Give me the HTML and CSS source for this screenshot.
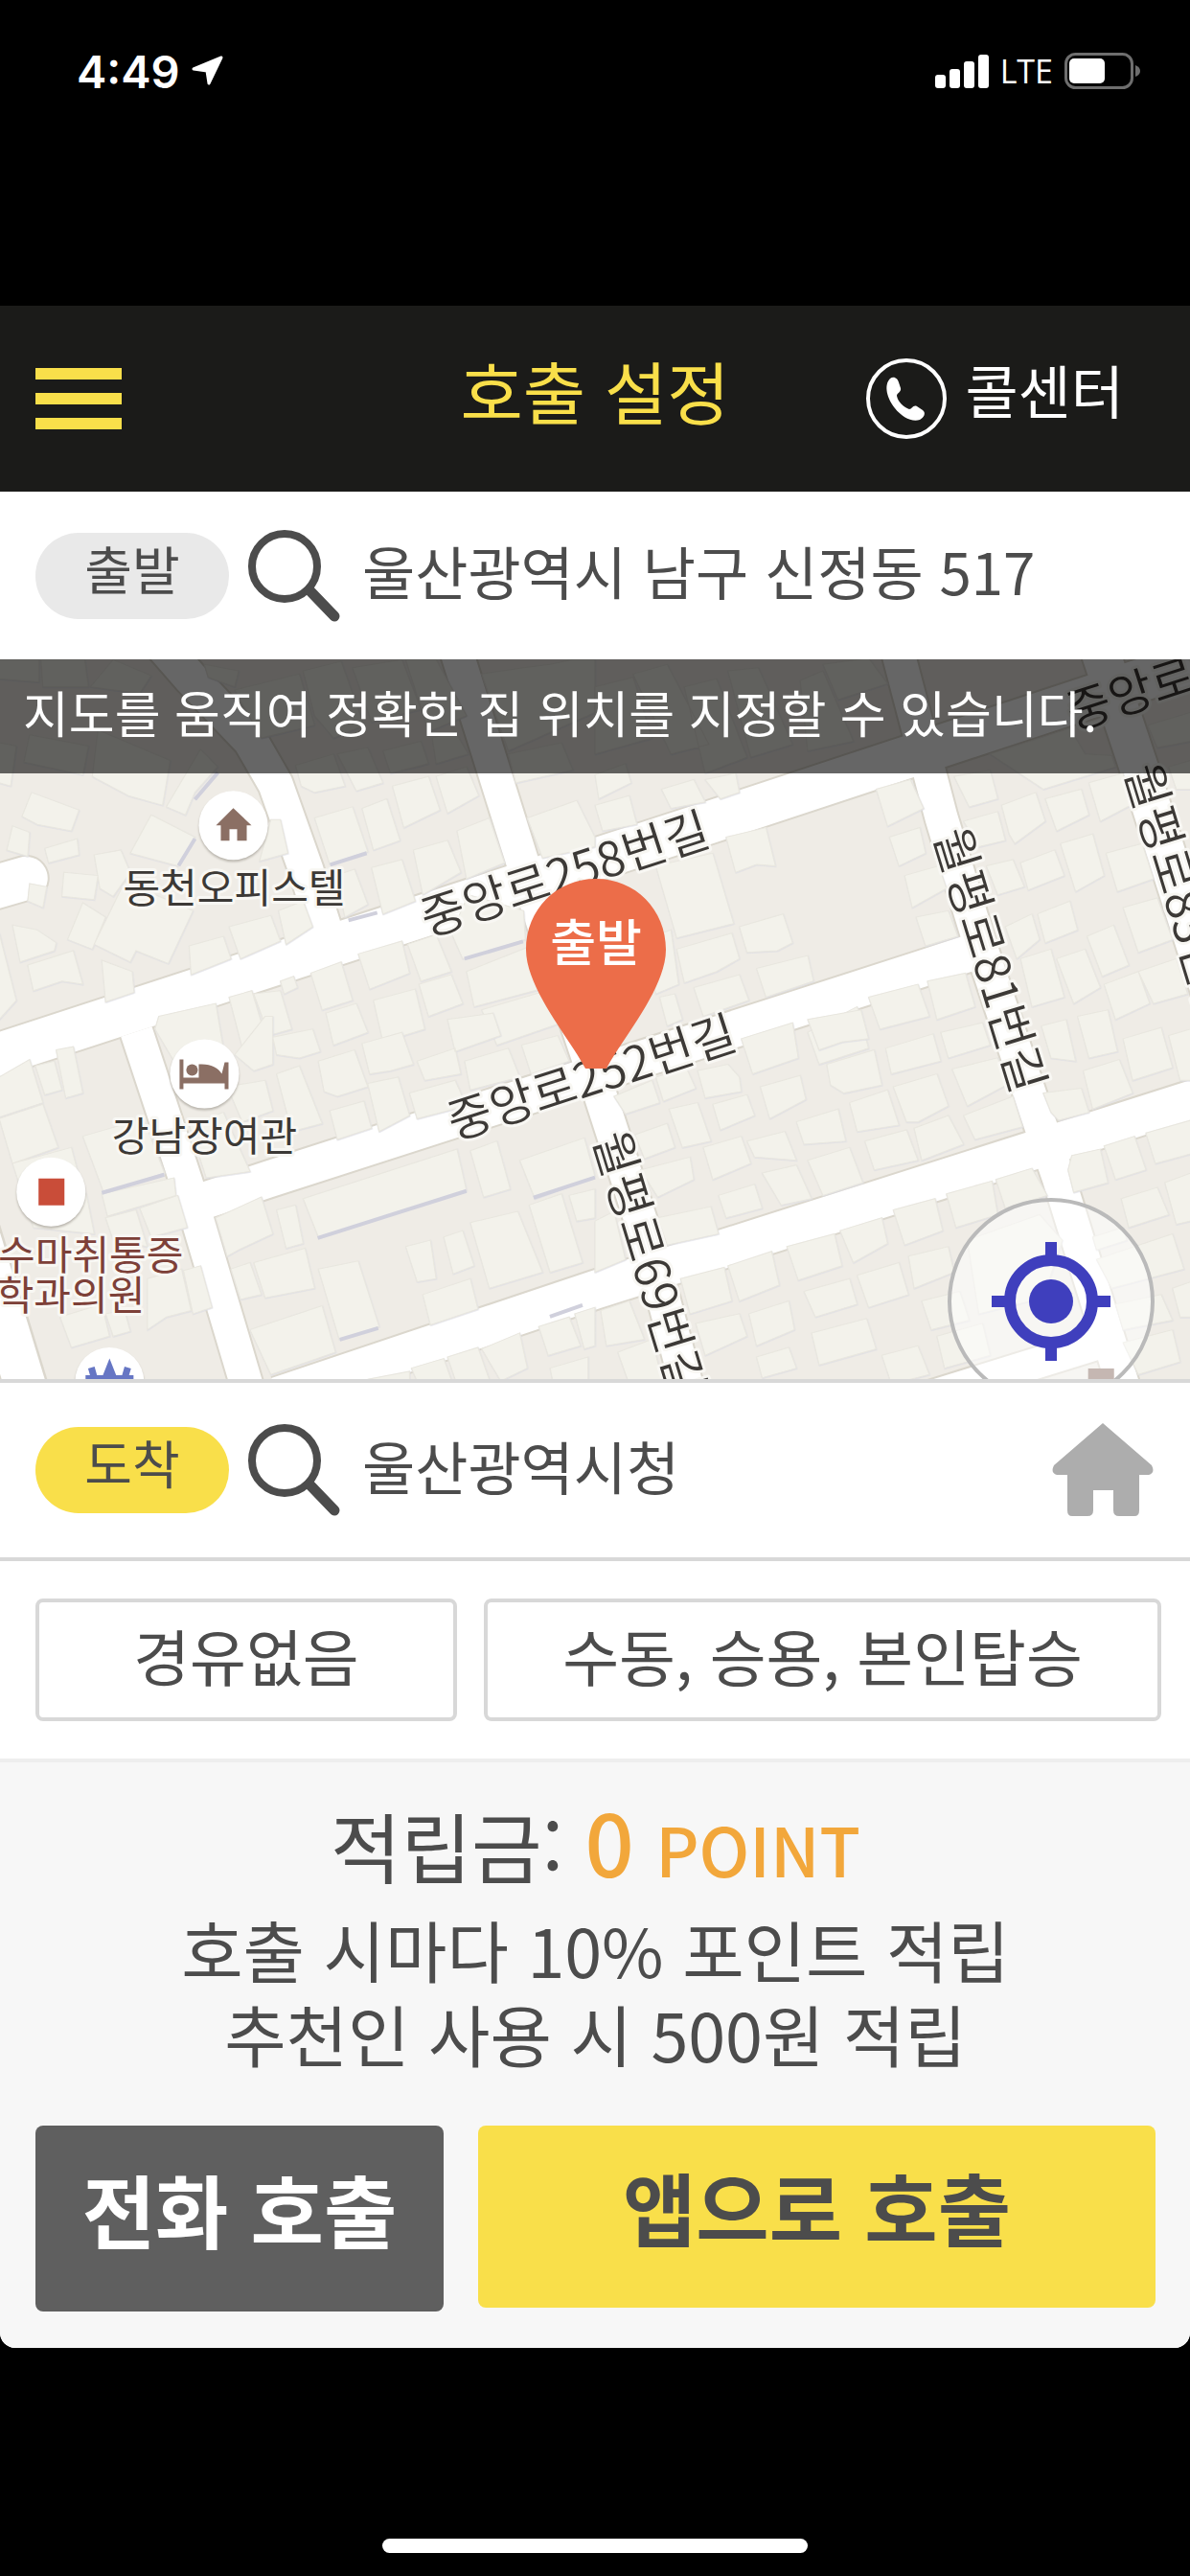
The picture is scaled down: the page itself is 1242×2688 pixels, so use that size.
FILE: index.html
```html
<!DOCTYPE html>
<html lang="ko">
<head>
<meta charset="utf-8">
<meta name="viewport" content="width=device-width">
<title>호출 설정</title>
<link rel="stylesheet" href="styles.css">
</head>
<body>

<!-- Status bar -->
<div class="status">
  <div class="status-left">
    <span class="clock">4:49</span>
    <svg width="34" height="32" viewBox="0 0 34 32"><path d="M31 2 L18 29 L16 16 L2 14 Z" fill="#fff" stroke="#fff" stroke-width="3" stroke-linejoin="round"/></svg>
  </div>
  <div class="status-right">
    <svg width="56" height="36" viewBox="0 0 56 36" fill="#fff">
      <rect x="0" y="22" width="11" height="14" rx="3"/>
      <rect x="15" y="16" width="11" height="20" rx="3"/>
      <rect x="30" y="8" width="11" height="28" rx="3"/>
      <rect x="45" y="1" width="11" height="35" rx="3"/>
    </svg>
    <span class="carrier">LTE</span>
    <svg width="80" height="38" viewBox="0 0 80 38">
      <rect x="1.5" y="1.5" width="69" height="35" rx="10" fill="none" stroke="#6e6e6e" stroke-width="3"/>
      <rect x="5" y="6" width="37" height="26" rx="5" fill="#fff"/>
      <path d="M74 13 Q79 15 79 19 Q79 23 74 25 Z" fill="#6e6e6e"/>
    </svg>
  </div>
</div>

<div class="app">

  <header class="topbar">
    <button class="menu" type="button" aria-label="메뉴"><span></span><span></span><span></span></button>
    <h1>호출 설정</h1>
    <a class="call-center" href="#">
      <svg width="86" height="86" viewBox="0 0 86 86">
        <circle cx="43" cy="43" r="40" fill="none" stroke="#fff" stroke-width="4"/>
        <path d="M26 22 C30 19 34 22 35 26 L37 32 C38 36 33 37 33 40 C34 46 40 52 46 54 C49 54 50 49 54 51 L60 55 C64 58 61 63 57 65 C49 68 38 62 31 53 C23 43 19 29 26 22 Z" fill="#fff"/>
      </svg>
      <span>콜센터</span>
    </a>
  </header>

  <!-- Departure -->
  <div class="place">
    <label class="pill" for="from">출발</label>
    <button class="icon-btn" type="button" aria-label="출발지 검색">
      <svg width="100" height="98" viewBox="0 0 100 98" fill="none" stroke="#4c4c4c">
        <circle cx="39" cy="39" r="34" stroke-width="8"/>
        <path d="M65 64 L91 91" stroke-width="11" stroke-linecap="round"/>
      </svg>
    </button>
    <input id="from" type="text" value="울산광역시 남구 신정동 517">
  </div>

  <!-- Map -->
  <div class="map">
    <svg class="map-canvas" viewBox="0 0 1242 750" preserveAspectRatio="xMidYMid slice">
      <rect width="1242" height="750" fill="#efece6"/>

      <!-- road edges, then the roads -->
      <g class="road-edge">
        <path d="M-20 418 L740 170 L1262 -2" stroke-width="48"/>
        <path d="M190 572 L280 542 L960 323 L1015 305" stroke-width="42"/>
        <path d="M290 768 L621 657 L1262 453" stroke-width="44"/>
        <path d="M143 388 L195 545 L262 770" stroke-width="38"/>
        <path d="M165 -20 L200 20 L262 85 L288 130 L320 220 L345 300" stroke-width="40"/>
        <path d="M476 -10 L545 210 L622 440 L680 620 L718 762" stroke-width="38"/>
        <path d="M936 -10 L982 165 L1020 290 L1080 470 L1104 540 L1174 765" stroke-width="38"/>
        <path d="M1147 -10 L1187 110 L1262 345" stroke-width="44"/>
        <path d="M-20 242 L28 228" stroke-width="49" stroke-linecap="round"/>
        <path d="M-30 570 L28 760" stroke-width="48"/>
        <path d="M970 768 L1150 712" stroke-width="36"/>
      </g>
      <g class="road">
        <path d="M-20 418 L740 170 L1262 -2" stroke-width="44"/>
        <path d="M190 572 L280 542 L960 323 L1015 305" stroke-width="38"/>
        <path d="M290 768 L621 657 L1262 453" stroke-width="40"/>
        <path d="M143 388 L195 545 L262 770" stroke-width="34"/>
        <path d="M165 -20 L200 20 L262 85 L288 130 L320 220 L345 300" stroke-width="36"/>
        <path d="M476 -10 L545 210 L622 440 L680 620 L718 762" stroke-width="34"/>
        <path d="M936 -10 L982 165 L1020 290 L1080 470 L1104 540 L1174 765" stroke-width="34"/>
        <path d="M1147 -10 L1187 110 L1262 345" stroke-width="40"/>
        <path d="M-20 242 L28 228" stroke-width="45" stroke-linecap="round"/>
        <path d="M-30 570 L28 760" stroke-width="43"/>
        <path d="M970 768 L1150 712" stroke-width="32"/>
      </g>

      <!-- buildings, one group for each tile -->
      <g class="building" transform="translate(0 -8) scale(.396 .3333)">
        <path d="M0 25H105V95L0 85Z M110 25H225L235 110H115Z M300 25L400 75L370 130L240 110Z M80 260L235 295L220 385L65 345Z M0 285L45 295L30 420L0 410Z M260 245L450 340L430 480L340 450L245 390Z M530 305L575 360L515 440L490 510L440 485Z"/>
        <path d="M85 440L210 495L190 560L100 540L60 515Z M35 545L80 565L75 640L20 620Z M120 615L205 585L210 635L130 660Z M400 510L515 580L470 670L345 630Z M250 635L320 620L345 690L300 765L265 740Z M170 690L260 700L250 775L165 765Z M80 725L125 735L115 800L75 780Z"/>
        <path d="M330 720L510 810L445 975L360 935L345 970L250 915Z M220 785L280 830L245 930L180 900Z M35 855L100 870L150 910L145 935L55 970Z M75 980L195 935L220 1040L165 1030L90 1060Z M270 965L350 1000L355 1065L280 1095Z M0 880L45 1090L0 1150Z"/>
        <path d="M500 920L590 890L610 960L505 1010Z M605 860L715 825L740 905L635 960Z M735 810L800 780L825 860L755 915Z M715 525L740 525L760 630L685 655Z M540 40L630 60L620 110L550 80Z"/>
        <path d="M620 120L790 70L830 230L690 270Z M800 60L900 30L960 230L880 270L830 200Z M930 50L1060 25L1110 180L980 220Z M1070 25H1150L1230 200L1130 250Z M780 355L880 320L910 420L830 440L795 420Z M890 320L970 300L1010 410L940 435Z M1010 310L1110 280L1130 350L1030 380Z M1140 270L1200 250L1235 320L1150 350Z"/>
        <path d="M830 520L930 485L970 625L870 665Z M955 490L1020 460L1055 590L985 620Z M1035 420L1130 390L1160 495L1065 550Z M1150 390L1230 360L1262 450L1180 505Z M1205 560L1290 520L1330 660L1230 710Z M980 675L1060 650L1095 780L1010 820Z M1090 620L1180 590L1215 690L1115 760Z M885 700L935 680L970 790L910 830Z"/>
        <path d="M1270 70L1380 50L1450 40L1510 25H1568V190L1340 310Z M1340 320L1480 285L1510 370L1360 410Z M1390 520L1520 465L1568 580V610L1430 645Z M1235 760L1380 810L1385 900L1220 960L1190 880Z M1230 1000L1400 920L1440 1050L1250 1110Z"/>
        <path d="M945 945L1060 905L1080 1005L975 1055Z M1075 915L1150 885L1190 1000L1110 1030Z M820 1005L900 970L930 1090L850 1120Z M740 1030L775 1015L785 1050L750 1070Z M985 1090L1095 1055L1120 1180L1010 1220Z M1105 1040L1190 1010L1220 1100L1130 1140Z M605 1080L665 1060L700 1200L640 1240Z M670 1070L740 1060L770 1180L710 1200Z M420 1140L570 1100L590 1240L470 1300L410 1180Z M860 1130L940 1100L970 1190L880 1230Z M1270 1120L1440 1060L1480 1160L1310 1230Z"/>
      </g>
      <g class="building" transform="translate(621 -8) scale(.396 .3333)">
        <path d="M0 110L100 80L150 270L0 320Z M100 70L190 40L300 290L200 320Z M235 110L320 85L400 330L290 380Z M350 60L430 50L520 290L410 330Z M540 90L600 60L680 280L560 310Z M600 40L720 20L770 100L640 150Z"/>
        <path d="M0 385L80 350L95 410L10 460Z M175 430L260 400L290 470L200 490Z M290 400L370 380L380 440L330 460Z M0 480L90 450L110 540L20 560Z M160 670L310 630L365 850L215 895Z M345 580L450 550L475 670L425 665L370 690Z"/>
        <path d="M740 430L830 400L865 490L770 545Z M775 580L855 550L870 630L800 670Z M815 700L905 670L925 740L835 800Z M845 830L930 810L955 890L870 920Z M380 860L495 820L520 910L480 935L400 940Z M215 930L360 880L380 960L320 1000L235 1035Z M425 990L560 950L575 1030L450 1080Z M260 1050L380 1010L405 1090L285 1140Z M130 900L200 870L220 1040L160 1070Z M170 1080L210 1070L230 1150L190 1170Z"/>
        <path d="M1040 320L1250 240L1290 320L1360 325L1370 360L1180 430Z M945 390L1040 370L1060 460L985 485Z M1070 480L1160 440L1185 530L1105 600L1090 570Z M1185 460L1280 430L1300 510L1215 560Z M1300 410L1390 380L1410 480L1330 530Z M970 530L1060 500L1080 590L1010 610Z M1030 670L1100 650L1130 735L1060 760Z M1120 660L1210 620L1235 700L1140 745Z M1225 600L1310 570L1340 700L1265 750Z M1345 630L1440 600L1470 710L1375 750Z M1455 230L1568 190V280L1480 300Z M1510 360L1568 340V430H1530Z"/>
        <path d="M1080 860L1150 820L1170 900L1110 960Z M1165 820L1250 780L1270 870L1185 910Z M1295 890L1365 855L1405 980L1335 1015Z M1390 800L1480 770L1520 900L1430 940Z M1215 960L1290 930L1330 1050L1260 1100Z M1340 1040L1430 1000L1460 1100L1370 1150Z M1430 1000L1530 960L1560 1070L1470 1100Z M1120 960L1200 930L1235 1080L1150 1110Z"/>
        <path d="M720 1080L850 1040L880 1140L750 1180Z M875 1030L975 1005L1000 1110L900 1150Z M560 1190L690 1110L720 1240L590 1290Z"/>
      </g>
      <g class="building" transform="translate(0 372) scale(.396 .3333)">
        <path d="M0 190L80 135L115 270L0 315Z M95 155L145 140L165 230L120 245Z M150 105L195 95L220 240L175 255Z M0 320L115 275L155 410L35 460Z M220 375L380 320L435 490L275 550Z M270 555L460 505L465 560L285 625Z M280 630L360 605L390 720L300 700Z M370 600L470 560L495 660L400 690Z M35 460L190 410L210 500L230 560L250 680L90 660Z"/>
        <path d="M390 820L480 790L505 920L440 940L390 980Z M485 795L530 780L560 910L510 930Z M160 940L270 900L290 1000L190 1035Z M280 930L330 920L345 985L300 1000Z"/>
        <path d="M620 120L700 0H720V150L670 170Z M720 65L825 40L845 110L790 130L730 120Z M840 140L935 105L970 220L890 250L855 235Z M730 180L790 155L850 335L770 360Z M600 220L700 200L720 295L640 330Z M870 295L960 265L980 350L890 385Z M955 85L1060 50L1090 150L1030 170L975 180Z M970 210L1050 190L1080 310L1000 360Z M1080 240L1200 200L1230 280L1100 320Z M1100 140L1200 100L1215 180L1120 200Z M1225 140L1340 100L1370 190L1240 230Z M1375 90L1470 60L1500 140L1400 180Z M1180 10L1300 -10L1320 60L1200 110Z M500 340L590 300L660 485L545 505Z"/>
        <path d="M800 570L1205 415L1230 545L840 690Z M1240 420L1310 390L1345 540L1275 565Z M1370 450L1540 380L1568 500L1410 570Z M570 630L690 565L720 680L630 730L600 750Z M730 605L780 590L800 710L755 725Z M670 770L805 725L830 850L700 880Z M610 790L660 770L690 870L635 885Z M840 790L945 765L1000 970L895 1010Z M660 980L850 905L885 1050L715 1120Z M1070 720L1135 700L1150 820L1100 830Z M1170 690L1220 670L1250 780L1195 805Z M1240 645L1365 610L1430 800L1290 850Z M1395 590L1480 555L1535 770L1450 800Z M1500 560L1568 540V630L1520 640Z M1115 870L1240 820L1260 915L1135 965Z"/>
        <path d="M970 1135L1080 1110V1160H970Z M1085 1100L1170 1070L1200 1170H1110Z M1180 1065L1260 1035L1300 1170H1210Z M1270 1040L1370 990L1390 1100L1320 1140Z M1420 970L1500 940L1530 1030L1445 1060Z M1515 930L1568 910V1030L1540 1040Z M1450 1100L1550 1065V1160H1460Z"/>
      </g>
      <g class="building" transform="translate(621 372) scale(.396 .3333)">
        <path d="M50 250L150 200L170 270L80 305Z M160 190L240 160L265 225L180 265Z M270 170L350 150L380 190L385 235L290 255Z M385 70L520 20L535 130L415 180Z M560 10L700 -20L720 70L650 80L590 105Z M195 290L270 270L305 390L230 410Z M310 275L400 245L420 310L330 355Z M435 220L540 185L555 260L460 320Z M610 150L735 105L755 215L655 240L620 215Z M765 100L890 55L910 140L780 180Z M910 50L1020 20L1040 90L930 130Z M785 220L900 180L930 280L850 330L820 330Z M940 165L1060 130L1090 210L980 280Z M670 270L770 230L800 340L690 360Z M970 310L1100 250L1125 345L1000 385Z"/>
        <path d="M105 370L190 335L210 410L130 445Z M285 410L385 375L410 460L310 510Z M400 390L500 360L530 450L420 440Z M530 330L640 290L660 390L550 400Z M560 450L670 410L705 520L600 560Z M710 390L820 355L850 450L735 480Z M840 350L930 310L970 400L860 450Z M120 480L250 440L260 510L165 565Z M325 560L420 525L440 600L345 630Z M440 490L530 465L570 570L490 590Z M165 630L305 595L325 680L190 715Z"/>
        <path d="M225 820L340 785L360 890L250 930Z M350 780L465 735L485 840L380 890Z M505 720L630 680L650 780L535 825Z M645 670L755 630L770 710L680 770Z M785 605L895 570L915 670L815 715Z M925 555L1045 515L1060 620L950 660Z M1055 510L1150 475L1190 560L1080 600Z M825 750L930 720L945 800L840 850Z M690 810L800 770L825 870L720 910Z M550 860L670 820L690 900L580 940Z M860 890L960 860L985 950L885 980Z M405 930L510 890L525 980L425 1030Z M265 960L380 930L400 1000L290 1060Z M570 990L715 945L740 1040L590 1090Z M425 1065L510 1035L530 1100L440 1130Z M755 1060L850 1030L880 1120L780 1150Z M900 1000L1020 960L1040 1060L920 1100Z"/>
        <path d="M15 920L90 890L130 1010L30 1030Z M60 1050L150 1010L180 1150H90Z M0 640L50 610L80 760L0 800Z M980 700L1170 620L1230 700L1180 880L1010 930Z"/>
        <path d="M1180 240L1280 225L1300 300L1220 325L1200 300Z M1285 170L1380 135L1415 240L1310 290Z M1390 70L1490 35L1520 160L1415 200Z M1510 60L1568 40V200H1540Z M1175 30L1240 10L1265 140L1200 130Z M1270 0L1350 -20L1375 110L1300 130Z"/>
        <path d="M1255 435L1330 415L1350 520L1260 550L1245 480Z M1340 405L1420 375L1450 480L1370 510Z M1450 365L1568 325V430L1475 460Z M1385 570L1480 535L1510 620L1405 660Z M1500 520L1568 490V640L1530 650Z M1320 760L1520 680L1550 790L1360 850Z M1370 900L1490 870L1520 950L1390 980Z M1520 850L1568 830V940H1540Z M1390 1020L1520 980L1540 1080L1430 1120Z M1310 690L1390 660L1400 700L1320 730Z"/>
      </g>
      <path class="deep-shadow" d="M332 603L487 554 M355 709L395 697 M107 556L172 537 M485 312L546 294 M557 561L621 540 M204 146L228 118 M187 215L204 187 M345 214L383 202 M364 272L394 264 M574 685L608 673"/>

      <!-- places -->
      <g class="poi">
        <circle cx="244" cy="173" r="36"/>
        <circle cx="214" cy="432" r="36"/>
        <circle cx="54" cy="555" r="36"/>
        <circle cx="115" cy="753" r="36"/>
      </g>
      <path d="M244 155L263 173H258V189H248V177H240V189H231V173H226Z" fill="#8b6f64"/>
      <path d="M188 417H192V436H208V422C220 421 229 426 232 432L235 420H239V448H235V442H192V448H188Z" fill="#8b6f64"/>
      <circle cx="201" cy="428" r="6" fill="#8b6f64"/>
      <rect x="41" y="541" width="27" height="28" fill="#c94d39"/>
      <path d="M96 738L104 766L115 738L126 766L134 738" fill="none" stroke="#6676c4" stroke-width="7"/>
      <path d="M90 748H140" stroke="#6676c4" stroke-width="4"/>
      <rect x="1135" y="739" width="27" height="11" fill="#8b6f64"/>

      <g class="poi-name">
        <text x="245" y="254">동천오피스텔</text>
        <text x="214" y="512">강남장여관</text>
      </g>
      <g class="poi-name clinic">
        <text x="192" y="636">수마취통증</text>
        <text x="152" y="678">학과의원</text>
      </g>

      <g class="road-name">
        <text x="0" y="18" transform="translate(441 272) rotate(-18)">중앙로258번길</text>
        <text x="0" y="18" transform="translate(469 484) rotate(-18)">중앙로252번길</text>
        <text x="0" y="18" transform="translate(1114 57) rotate(-18)">중앙로258번길</text>
        <text x="0" y="18" transform="translate(991 177) rotate(73)">월평로81번길</text>
        <text x="0" y="18" transform="translate(1190 110) rotate(73)">월평로83번길</text>
        <text x="0" y="18" transform="translate(636 493) rotate(73)">월평로69번길</text>
      </g>
    </svg>

    <p class="notice">지도를 움직여 정확한 집 위치를 지정할 수 있습니다.</p>

    <div class="pin">
      <svg width="146" height="198" viewBox="0 0 146 198"><path d="M62 198 C48 170 0 115 0 74 C0 32 32 0 73 0 C114 0 146 32 146 74 C146 115 98 170 84 198 Z" fill="#ec6d49"/></svg>
      <span>출발</span>
    </div>

    <button class="locate" type="button" aria-label="현재 위치">
      <svg width="124" height="124" viewBox="0 0 124 124" fill="none" stroke="#3f3fbd" stroke-width="12">
        <circle cx="62" cy="62" r="43"/>
        <path d="M62 0V16 M62 108V124 M0 62H16 M108 62H124"/>
        <circle cx="62" cy="62" r="23" fill="#3f3fbd" stroke="none"/>
      </svg>
    </button>
  </div>

  <!-- Destination -->
  <div class="place destination">
    <label class="pill yellow" for="to">도착</label>
    <button class="icon-btn" type="button" aria-label="도착지 검색">
      <svg width="100" height="98" viewBox="0 0 100 98" fill="none" stroke="#4c4c4c">
        <circle cx="39" cy="39" r="34" stroke-width="8"/>
        <path d="M65 64 L91 91" stroke-width="11" stroke-linecap="round"/>
      </svg>
    </button>
    <input id="to" type="text" value="울산광역시청">
    <button class="icon-btn" type="button" aria-label="집으로">
      <svg width="106" height="98" viewBox="0 0 106 98"><path d="M53 0 L104 44 Q108 52 101 54 H91 V91 Q91 97 86 97 H70 Q64 97 64 91 V70 H43 V91 Q43 97 37 97 H21 Q16 97 16 91 V54 H5 Q-2 52 2 44 Z" fill="#adadad"/></svg>
    </button>
  </div>

  <!-- Options -->
  <div class="options">
    <button class="option" type="button">경유없음</button>
    <button class="option" type="button">수동, 승용, 본인탑승</button>
  </div>

  <!-- Points and call buttons -->
  <div class="bottom">
    <p class="points">적립금: <b class="amount">0</b> <b class="unit">POINT</b></p>
    <p class="info">호출 시마다 10% 포인트 적립<br>추천인 사용 시 500원 적립</p>
    <div class="calls">
      <button class="call phone" type="button">전화 호출</button>
      <button class="call by-app" type="button">앱으로 호출</button>
    </div>
  </div>

</div>

<div class="home-bar"></div>

</body>
</html>
```

FILE: styles.css
```css
* {
    box-sizing: border-box;
}

body {
    margin: 0;
    min-height: 100vh;
    display: flex;
    flex-direction: column;
    background-color: #000;
    color: #4c4c4c;
    font-family: "Noto Sans CJK KR", sans-serif;
}

h1, p {
    margin: 0;
}

svg {
    display: block;
    flex-shrink: 0;
}

button, input {
    padding: 0;
    border: 0;
    background: none;
    color: inherit;
    font-family: inherit;
}

/* Status bar */
.status {
    height: 319px;
    padding: 44px 51px 0 80px;
    display: flex;
    justify-content: space-between;
    align-items: flex-start;
    color: #fff;
    font-family: Inter, sans-serif;
}

.status-left,
.status-right {
    height: 60px;
    display: flex;
    align-items: center;
    gap: 12px;
}

.clock {
    font-size: 47px;
    font-weight: 600;
}

.carrier {
    font-family: "Open Sans", sans-serif;
    font-size: 34px;
    font-weight: 500;
}

/* App */
.app {
    overflow: hidden;
    border-radius: 0 0 16px 16px;
    background-color: #fff;
}

.topbar {
    height: 194px;
    padding: 0 37px;
    display: grid;
    grid-template-columns: 1fr auto 1fr;
    align-items: center;
    background-color: #1b1b19;
}

.menu {
    width: 90px;
    display: flex;
    flex-direction: column;
    gap: 14px;
}

.menu span {
    width: 100%;
    height: 12px;
    background-color: #f9df4a;
}

h1 {
    padding-bottom: 20px;
    color: #f9df4a;
    font-size: 71px;
    font-weight: 400;
    line-height: 100px;
}

.call-center {
    margin-right: 32px;
    justify-self: end;
    display: flex;
    align-items: center;
    gap: 18px;
    color: #fff;
    font-size: 60px;
    line-height: 80px;
    text-decoration: none;
}

.call-center span {
    padding-bottom: 20px;
}

/* Address rows */
.place {
    height: 175px;
    padding: 0 38px 0 37px;
    display: flex;
    align-items: center;
}

.destination {
    height: 190px;
    border-top: 4px solid #d8d8d8;
    border-bottom: 4px solid #d8d8d8;
}

.pill {
    width: 202px;
    height: 90px;
    margin-right: 19px;
    flex-shrink: 0;
    border-radius: 45px;
    background-color: #e9e9e9;
    font-size: 54px;
    line-height: 74px;
    text-align: center;
}

.yellow {
    background-color: #f9df4a;
}

.icon-btn {
    flex-shrink: 0;
    cursor: pointer;
}

.place input {
    min-width: 0;
    height: 90px;
    margin-left: 20px;
    flex: 1;
    padding-bottom: 12px;
    font-size: 60px;
}

/* Map */
.map {
    position: relative;
    aspect-ratio: 1242 / 751;
    overflow: hidden;
}

.map-canvas {
    width: 100%;
    height: 100%;
}

.road, .road-edge {
    fill: none;
    stroke: #fff;
    stroke-linejoin: round;
}

.road-edge {
    stroke: #dbd7cd;
}

.building {
    fill: #f3f2eb;
    stroke: #e9e7df;
    stroke-width: 3;
    filter: drop-shadow(1px 2px 0 #dddde3);
}

.deep-shadow {
    fill: none;
    stroke: #d0d0dc;
    stroke-width: 4;
}

.poi {
    fill: #fff;
    filter: drop-shadow(0 2px 1px #b9b5ad);
}

.poi-name, .road-name {
    fill: #3c3936;
    stroke: #f8f7f3;
    stroke-width: 6;
    stroke-linejoin: round;
    paint-order: stroke;
    font-size: 42px;
}

.poi-name {
    text-anchor: middle;
}

.clinic {
    fill: #7d4038;
    text-anchor: end;
}

.road-name {
    font-size: 50px;
    font-weight: 350;
}

.notice {
    position: absolute; /* over the map */
    top: 0;
    left: 0;
    right: 0;
    height: 119px;
    padding-left: 24px;
    background-color: rgba(0,0,0,0.6);
    color: #fff;
    font-size: 52px;
    line-height: 110px;
    white-space: nowrap;
}

.pin {
    position: absolute;
    top: 229px;
    left: 50%;
    margin-left: -72px;
    display: grid;
    justify-items: center;
}

.pin svg, .pin span {
    grid-area: 1 / 1;
}

.pin span {
    padding-top: 26px;
    color: #fff;
    font-size: 52px;
    font-weight: 500;
    line-height: 76px;
}

.locate {
    position: absolute;
    top: 562px;
    right: 37px;
    width: 216px;
    height: 216px;
    display: flex;
    align-items: center;
    justify-content: center;
    border: 4px solid #bababa;
    border-radius: 50%;
    background-color: rgba(255,255,255,0.5);
}

/* Options */
.options {
    padding: 39px 30px 39px 37px;
    display: grid;
    grid-template-columns: 440fr 707fr;
    gap: 28px;
}

.option {
    height: 128px;
    padding-bottom: 12px;
    border: 4px solid #d8d8d8;
    border-radius: 8px;
    font-size: 64px;
}

/* Bottom */
.bottom {
    padding: 28px 36px 38px 37px;
    border-top: 4px solid #eee;
    background-color: #f7f7f7;
    text-align: center;
}

.points {
    font-size: 80px;
    line-height: 106px;
}

.points b {
    color: #f2a73b;
    font-weight: 500;
}

.amount {
    font-size: 90px;
}

.unit {
    font-size: 70px;
}

.info {
    padding-top: 8px;
    font-size: 70px;
    line-height: 88px;
}

.calls {
    padding-top: 52px;
    display: flex;
    align-items: flex-start;
    gap: 36px;
}

.call {
    height: 190px;
    padding-bottom: 22px;
    flex: 707;
    border-radius: 8px;
    font-size: 83px;
    font-weight: 700;
}

.phone {
    height: 194px;
    flex: 426;
    background-color: #5f5f5f;
    color: #fff;
}

.by-app {
    background-color: #f9df4a;
}

.home-bar {
    width: 444px;
    height: 15px;
    margin: auto auto 24px;
    border-radius: 8px;
    background-color: #fff;
}
```
